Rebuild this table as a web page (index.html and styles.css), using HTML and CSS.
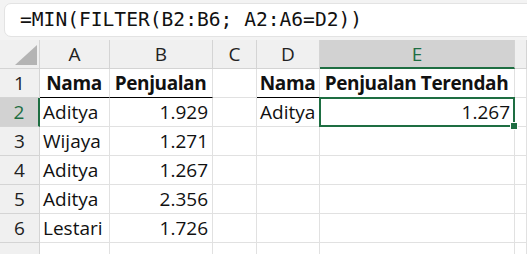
FILE: index.html
```html
<!DOCTYPE html>
<html lang="id">
<head>
    <meta charset="UTF-8">
    <title>Penjualan Terendah</title>
    <link rel="stylesheet" href="styles.css">
</head>
<body>
    <!-- bilah rumus -->
    <div class="formula-strip">
        <div class="formula-box">=MIN(FILTER(B2:B6; A2:A6=D2))</div>
    </div>

    <div class="sheet">
        <!-- judul kolom -->
        <div class="corner"><span class="corner-tri"></span></div>
        <div class="col-head">A</div>
        <div class="col-head">B</div>
        <div class="col-head">C</div>
        <div class="col-head">D</div>
        <div class="col-head active">E</div>
        <div class="col-head"></div>

        <div class="row-head">1</div>
        <div class="cell head-cell">Nama</div>
        <div class="cell head-cell">Penjualan</div>
        <div class="cell"></div>
        <div class="cell head-cell">Nama</div>
        <div class="cell head-cell">Penjualan Terendah</div>
        <div class="cell"></div>

        <div class="row-head active">2</div>
        <div class="cell">Aditya</div>
        <div class="cell num">1.929</div>
        <div class="cell"></div>
        <div class="cell">Aditya</div>
        <div class="cell num selected">1.267</div>
        <div class="cell"></div>

        <div class="row-head">3</div>
        <div class="cell">Wijaya</div>
        <div class="cell num">1.271</div>
        <div class="cell"></div>
        <div class="cell"></div>
        <div class="cell"></div>
        <div class="cell"></div>

        <div class="row-head">4</div>
        <div class="cell">Aditya</div>
        <div class="cell num">1.267</div>
        <div class="cell"></div>
        <div class="cell"></div>
        <div class="cell"></div>
        <div class="cell"></div>

        <div class="row-head">5</div>
        <div class="cell">Aditya</div>
        <div class="cell num">2.356</div>
        <div class="cell"></div>
        <div class="cell"></div>
        <div class="cell"></div>
        <div class="cell"></div>

        <div class="row-head">6</div>
        <div class="cell">Lestari</div>
        <div class="cell num">1.726</div>
        <div class="cell"></div>
        <div class="cell"></div>
        <div class="cell"></div>
        <div class="cell"></div>

        <div class="row-head"></div>
        <div class="cell"></div>
        <div class="cell"></div>
        <div class="cell"></div>
        <div class="cell"></div>
        <div class="cell"></div>
        <div class="cell"></div>
    </div>
</body>
</html>
```

FILE: styles.css
```css
body, html {
    margin: 0;
    padding: 0;
    width: 527px;
    height: 254px;
    overflow: hidden;
    background: #fff;
    font-family: 'Open Sans', 'Noto Sans', sans-serif;
}

.formula-strip {
    height: 40px;
    background-color: #f3f3f3;
    padding: 3px 0 0 4px;
    box-sizing: border-box;
}

.formula-box {
    height: 34px;
    margin-right: -20px;
    background-color: #fff;
    border: 1px solid #e3e3e3;
    border-radius: 7px;
    box-sizing: border-box;
    padding-left: 15px;
    font-family: 'DejaVu Sans Mono', 'Liberation Mono', monospace;
    font-size: 19.6px;
    line-height: 32px;
    color: #111;
    white-space: nowrap;
}

.sheet {
    display: grid;
    grid-template-columns: 40px 70px 103px 44px 63px 195px 1fr;
    grid-template-rows: repeat(7, 29px) 14px;
}

.sheet > div {
    box-sizing: border-box;
    border-right: 1px solid #e1e1e1;
    border-bottom: 1px solid #e1e1e1;
    font-size: 19px;
    color: #111;
    display: flex;
    align-items: center;
    white-space: nowrap;
}

.corner {
    background-color: #f0f0f0;
    position: relative;
}

/* segitiga pilih semua */
.corner-tri {
    position: absolute;
    right: 2px;
    bottom: 3px;
    width: 0;
    height: 0;
    border-left: 22px solid transparent;
    border-bottom: 20px solid #b4b4b4;
}

.sheet > .corner,
.sheet > .col-head,
.sheet > .row-head {
    background-color: #f0f0f0;
    border-color: #d4d4d4;
    color: #222;
    justify-content: center;
}

.sheet > .col-head.active {
    background-color: #d2d2d2;
    color: #1e6e42;
    border-bottom: 2px solid #1e6e42;
}

.sheet > .row-head.active {
    background-color: #d2d2d2;
    color: #1e6e42;
    border-right: 2px solid #1e6e42;
}

.cell {
    padding: 0 4px 0 3px;
}

.sheet > .head-cell {
    font-weight: 700;
    letter-spacing: -0.4px;
    justify-content: center;
    border-bottom: 1px solid #000;
}

.sheet > .num {
    justify-content: flex-end;
}

.selected {
    position: relative;
}

.selected::after {
    content: "";
    position: absolute;
    left: -1px;
    top: -1px;
    right: -1px;
    bottom: -1px;
    border: 2px solid #1e6e42;
}

/* gagang isi */
.selected::before {
    content: "";
    position: absolute;
    right: -4px;
    bottom: -4px;
    width: 6px;
    height: 6px;
    background-color: #1e6e42;
    border: 1px solid #fff;
    z-index: 1;
}
```
